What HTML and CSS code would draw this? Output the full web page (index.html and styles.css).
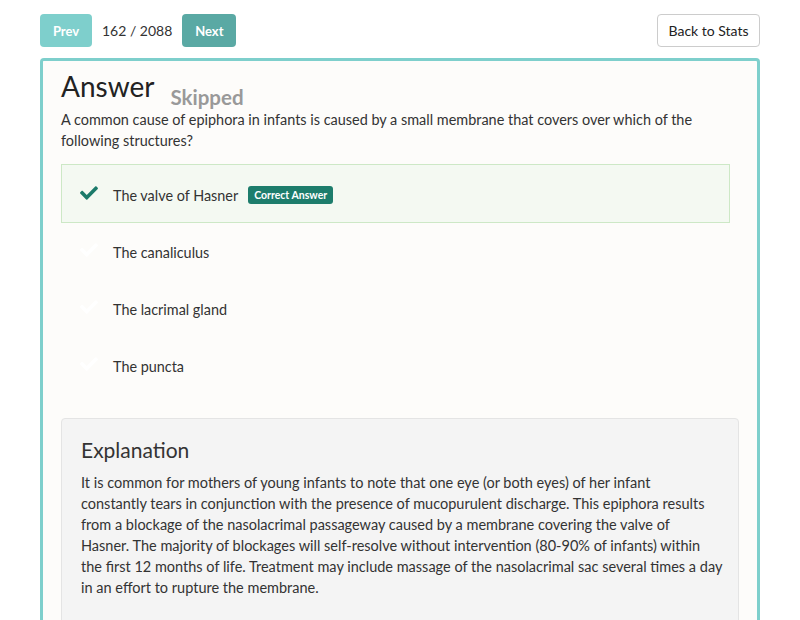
FILE: index.html
```html
<!DOCTYPE html>
<html>
<head>
<meta charset="utf-8">
<link rel="stylesheet" href="styles.css">
</head>
<body>
<div class="page">
  <div class="toolbar">
    <div class="nav">
      <button class="btn btn-prev">Prev</button>
      <span class="count">162 / 2088</span>
      <button class="btn btn-next">Next</button>
    </div>
    <button class="btn-back">Back to Stats</button>
  </div>
  <div class="panel">
    <div class="title-row">
      <h1 class="title">Answer</h1>
      <span class="status">Skipped</span>
    </div>
    <p class="question">A common cause of epiphora in infants is caused by a small membrane that covers over which of the following structures?</p>
    <ul class="options">
      <li class="option correct">
        <svg class="check" viewBox="0 0 512 512"><path d="M173.9 439.4L7.5 273c-10-10-10-26.2 0-36.2l36.2-36.2c10-10 26.2-10 36.2 0L192 312.7 432.1 72.6c10-10 26.2-10 36.2 0l36.2 36.2c10 10 10 26.2 0 36.2L210.1 439.4c-10 10-26.2 10-36.2 0z"/></svg>
        <span class="opt-text">The valve of Hasner</span>
        <span class="badge">Correct Answer</span>
      </li>
      <li class="option">
        <svg class="check faint" viewBox="0 0 512 512"><path d="M173.9 439.4L7.5 273c-10-10-10-26.2 0-36.2l36.2-36.2c10-10 26.2-10 36.2 0L192 312.7 432.1 72.6c10-10 26.2-10 36.2 0l36.2 36.2c10 10 10 26.2 0 36.2L210.1 439.4c-10 10-26.2 10-36.2 0z"/></svg>
        <span class="opt-text">The canaliculus</span>
      </li>
      <li class="option">
        <svg class="check faint" viewBox="0 0 512 512"><path d="M173.9 439.4L7.5 273c-10-10-10-26.2 0-36.2l36.2-36.2c10-10 26.2-10 36.2 0L192 312.7 432.1 72.6c10-10 26.2-10 36.2 0l36.2 36.2c10 10 10 26.2 0 36.2L210.1 439.4c-10 10-26.2 10-36.2 0z"/></svg>
        <span class="opt-text">The lacrimal gland</span>
      </li>
      <li class="option">
        <svg class="check faint" viewBox="0 0 512 512"><path d="M173.9 439.4L7.5 273c-10-10-10-26.2 0-36.2l36.2-36.2c10-10 26.2-10 36.2 0L192 312.7 432.1 72.6c10-10 26.2-10 36.2 0l36.2 36.2c10 10 10 26.2 0 36.2L210.1 439.4c-10 10-26.2 10-36.2 0z"/></svg>
        <span class="opt-text">The puncta</span>
      </li>
    </ul>
    <div class="explanation">
      <h2 class="exp-title">Explanation</h2>
      <p class="exp-text">It is common for mothers of young infants to note that one eye (or both eyes) of her infant<br>constantly tears in conjunction with the presence of mucopurulent discharge. This epiphora results<br>from a blockage of the nasolacrimal passageway caused by a membrane covering the valve of<br>Hasner. The majority of blockages will self-resolve without intervention (80-90% of infants) within<br>the first 12 months of life. Treatment may include massage of the nasolacrimal sac several times a day<br>in an effort to rupture the membrane.</p>
    </div>
  </div>
</div>
</body>
</html>
```

FILE: styles.css
```css
* { box-sizing: border-box; }
html, body { margin: 0; padding: 0; background: #ffffff; }
body {
  font-family: "Lato", "Open Sans", sans-serif;
  color: #333333;
  font-size: 14px;
  overflow: hidden;
}
.page {
  padding: 14px 40px 0 40px;
}
.toolbar {
  display: flex;
  justify-content: space-between;
  align-items: center;
  height: 33px;
}
.nav {
  display: flex;
  align-items: center;
}
.btn {
  border: none;
  border-radius: 4px;
  color: #ffffff;
  font-family: "Lato", sans-serif;
  font-weight: 700;
  font-size: 13px;
  height: 33px;
  padding: 0 12px;
}
.btn-prev { background: #7ecfcc; width: 52px; }
.btn-next { background: #5aa9a4; width: 54px; }
.count {
  font-size: 14px;
  color: #333;
  margin: 0 10px;
}
.btn-back {
  background: #ffffff;
  border: 1px solid #cccccc;
  border-radius: 4px;
  height: 33px;
  width: 103px;
  font-family: "Lato", sans-serif;
  font-size: 14px;
  color: #222;
}
.panel {
  margin-top: 11px;
  border: 3px solid #7ecfcc;
  border-bottom: none;
  border-radius: 4px 4px 0 0;
  background: #fdfcfa;
  padding: 8px 18px 40px 18px;
  height: 600px;
}
.title-row {
  display: flex;
  align-items: flex-end;
  gap: 16px;
  height: 34px;
}
.title {
  margin: 0;
  font-size: 28px;
  font-weight: 400;
  line-height: 34px;
  color: #222;
}
.status {
  font-size: 20.5px;
  font-weight: 700;
  color: #999999;
  line-height: 24px;
  margin-bottom: -6px;
}
.question {
  margin: 6px 0 0 0;
  line-height: 21px;
  font-size: 14.45px;
  color: #333;
}
.options {
  list-style: none;
  margin: 13px 9px 0 0;
  padding: 0;
}
.option {
  display: flex;
  align-items: center;
  height: 57px;
  padding-left: 16px;
  padding-top: 4px;
  border: 1px solid transparent;
  font-size: 14.4px;
  color: #333;
}
.option.correct {
  height: 59px;
  padding-top: 3px;
  background: #f4f9f2;
  border-color: #cde8c6;
  margin-bottom: -1px;
}
.check {
  width: 22px;
  height: 18px;
  fill: #1b7a6a;
  margin-right: 13px;
  margin-top: -5px;
}
.check.faint { fill: #ffffff; }
.opt-text { margin-right: 10px; }
.badge {
  background: #1d7d6c;
  color: #ffffff;
  font-size: 10.5px;
  font-weight: 700;
  padding: 3px 6px;
  border-radius: 3px;
  line-height: 12px;
}
.explanation {
  margin-top: 25px;
  background: #f4f4f4;
  border: 1px solid #e4e4e4;
  border-radius: 4px;
  padding: 16px 8px 40px 19px;
  min-height: 260px;
}
.exp-title {
  margin: 0 0 7px 0;
  font-size: 21px;
  font-weight: 400;
  line-height: 30px;
  color: #333;
}
.exp-text {
  margin: 0;
  line-height: 21px;
  font-size: 14.5px;
  color: #333;
}
```
